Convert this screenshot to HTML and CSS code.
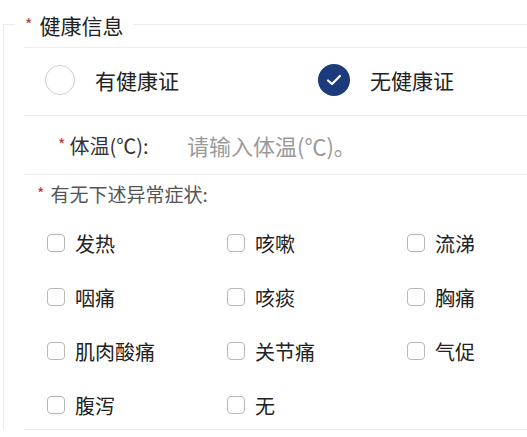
FILE: index.html
```html
<!DOCTYPE html>
<html lang="zh">
<head>
<meta charset="utf-8">
<link rel="stylesheet" href="styles.css">
</head>
<body>
<fieldset class="card">
  <legend class="legend"><span class="star">*</span>健康信息</legend>
  <div class="row radio-row">
    <label class="radio">
      <span class="circle"></span>
      <span class="radio-text">有健康证</span>
    </label>
    <label class="radio">
      <span class="circle checked">
        <svg width="16" height="12" viewBox="0 0 16 12"><path d="M2 6.5 L6 10 L14 2" fill="none" stroke="#fff" stroke-width="2.2" stroke-linecap="round" stroke-linejoin="round"/></svg>
      </span>
      <span class="radio-text">无健康证</span>
    </label>
  </div>
  <div class="row temp-row">
    <span class="temp-label"><span class="star">*</span>体温(℃):</span>
    <span class="placeholder">请输入体温(℃)。</span>
  </div>
  <div class="row symptom-row">
    <div class="symptom-title"><span class="star">*</span>有无下述异常症状:</div>
    <div class="grid">
      <label class="check"><span class="box"></span>发热</label>
      <label class="check"><span class="box"></span>咳嗽</label>
      <label class="check"><span class="box"></span>流涕</label>
      <label class="check"><span class="box"></span>咽痛</label>
      <label class="check"><span class="box"></span>咳痰</label>
      <label class="check"><span class="box"></span>胸痛</label>
      <label class="check"><span class="box"></span>肌肉酸痛</label>
      <label class="check"><span class="box"></span>关节痛</label>
      <label class="check"><span class="box"></span>气促</label>
      <label class="check"><span class="box"></span>腹泻</label>
      <label class="check"><span class="box"></span>无</label>
    </div>
  </div>
</fieldset>
</body>
</html>
```
FILE: styles.css
```css
html, body {
  margin: 0;
  padding: 0;
  background: #fff;
}
body {
  font-family: "Noto Sans CJK SC", "Noto Sans", sans-serif;
  color: #222;
  width: 527px;
  height: 437px;
  overflow: hidden;
}
.card {
  margin: 12px 0 0 3px;
  padding: 0 0 0 20px;
  border: 1px solid #ececec;
  border-right: 0;
  border-bottom: 0;
  min-inline-size: 0;
}
.legend {
  margin-left: -9px;
  padding: 0 10px;
  font-size: 21px;
  line-height: 24px;
  color: #222;
}
.star {
  color: #c0392b;
  font-size: 16px;
  margin-right: 4px;
  vertical-align: 3px;
}
.legend .star {
  margin-right: 7px;
}
.row {
  border-top: 1px solid #eeeeee;
}
.radio-row {
  margin-top: 10px;
  height: 63px;
  padding-bottom: 4px;
  display: grid;
  grid-template-columns: 273px 1fr;
  align-items: center;
  padding-left: 21px;
}
.radio {
  display: flex;
  align-items: center;
  gap: 20px;
}
.circle {
  width: 30px;
  height: 30px;
  box-sizing: border-box;
  border-radius: 50%;
  border: 1.5px solid #cfcfcf;
  display: flex;
  align-items: center;
  justify-content: center;
}
.circle.checked {
  border: 0;
  background: #1c3a7c;
  width: 32px;
  height: 32px;
}
.radio-text {
  font-size: 21px;
  line-height: 28px;
}
.temp-row {
  height: 58px;
  display: flex;
  align-items: center;
  padding-left: 34px;
}
.temp-label {
  font-size: 20px;
  color: #333;
  width: 129px;
}
.placeholder {
  font-size: 22px;
  color: #9a9a9a;
}
.symptom-row {
  padding-bottom: 6px;
  border-bottom: 1px solid #eeeeee;
}
.symptom-title {
  height: 36px;
  display: flex;
  align-items: center;
  padding-left: 13px;
  font-size: 19px;
  color: #555;
}
.symptom-title .star {
  margin-right: 6px;
}
.grid {
  margin-top: 14px;
  padding-left: 23px;
  display: grid;
  grid-template-columns: 180px 180px 1fr;
  grid-auto-rows: 36px;
  row-gap: 18px;
}
.check {
  display: flex;
  align-items: center;
  font-size: 20px;
  color: #222;
}
.box {
  width: 18px;
  height: 18px;
  box-sizing: border-box;
  border: 1.5px solid #b8b8b8;
  border-radius: 4px;
  margin-right: 10px;
}
```
